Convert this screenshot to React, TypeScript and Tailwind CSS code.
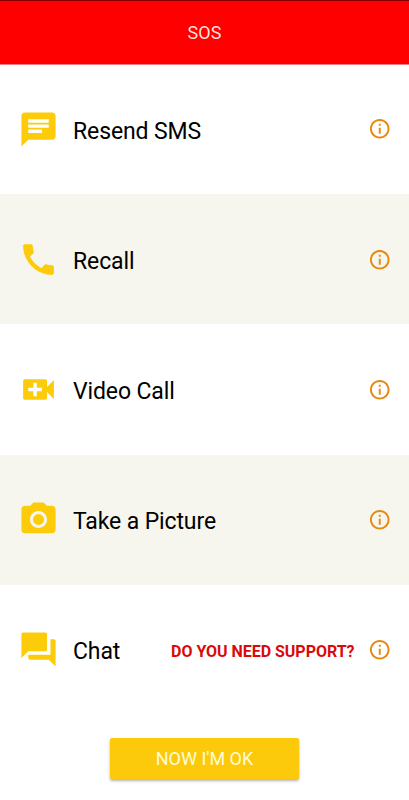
import React from "react";
import { IconType } from "react-icons";
import {
  MdCall,
  MdChat,
  MdForum,
  MdInfoOutline,
  MdPhotoCamera,
  MdVideoCall,
} from "react-icons/md";

type Action = {
  label: string;
  Icon: IconType;
  note?: string;
};

const actions: Action[] = [
  { label: "Resend SMS", Icon: MdChat },
  { label: "Recall", Icon: MdCall },
  { label: "Video Call", Icon: MdVideoCall },
  { label: "Take a Picture", Icon: MdPhotoCamera },
  { label: "Chat", Icon: MdForum, note: "DO YOU NEED SUPPORT?" },
];

const ActionRow = ({ label, Icon, note }: Action) => {
  return (
    <li className="flex h-[130.2px] items-center pl-[18px] pr-[18px] even:bg-[#f7f6ee]">
      <Icon className="size-[41px] shrink-0 text-[#fccb0a]" />
      <span className="ml-[14px] pt-[5px] text-[23px] leading-8 tracking-[-0.12px] text-black">
        {label}
      </span>
      <div className="ml-auto flex items-center gap-[13px]">
        {note && (
          <span className="pt-1 text-base font-bold tracking-[-0.03px] text-[#d90a08]">
            {note}
          </span>
        )}
        <button aria-label={`About ${label}`}>
          <MdInfoOutline className="size-[23.5px] text-[#e68a10]" />
        </button>
      </div>
    </li>
  );
};

const App = () => {
  return (
    <div className="flex h-screen flex-col bg-white font-[Roboto,sans-serif]">
      <header className="flex h-16 shrink-0 items-center justify-center border-t border-[#800000] bg-[#fe0000] shadow-[0_1px_0_#f08080]">
        <h1 className="text-lg text-[#ffdfdc]">SOS</h1>
      </header>
      <ul>
        {actions.map((action) => (
          <ActionRow key={action.label} {...action} />
        ))}
      </ul>
      <div className="flex justify-center pt-[23px]">
        <button className="h-[41px] w-[189px] rounded-xs bg-[#fdca0b] pt-[2px] text-lg text-[#fffbd9] shadow-[0_2px_3px_rgba(0,0,0,0.3)]">
          NOW I'M OK
        </button>
      </div>
    </div>
  );
};

export default App;
